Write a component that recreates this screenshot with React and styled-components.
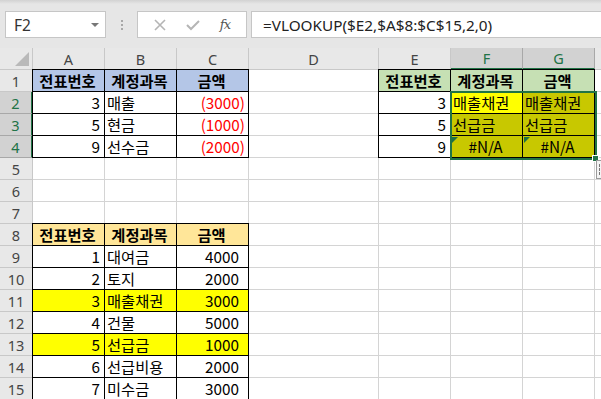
import React from 'react'
import styled, { createGlobalStyle } from 'styled-components'

const GlobalStyle = createGlobalStyle`
  body {
    margin: 0;
    overflow: hidden;
    background: #fff;
    font-family: "Noto Sans CJK KR", "Noto Sans", sans-serif;
  }
`

const GREEN = '#217346'
const BLUE = '#b4c6e7'
const LIGHTGREEN = '#c6e0b4'
const ORANGE = '#ffe699'
const YELLOW = '#ffff00'
const OLIVE = '#c8c800'

const Page = styled.div`
  width: 601px;
  height: 399px;
  overflow: hidden;
`

const TopBar = styled.div`
  height: 48px;
  display: flex;
  align-items: flex-start;
  padding-top: 11px;
  box-sizing: border-box;
  background: linear-gradient(#d2d2d2 0px, #e6e6e6 4px, #e6e6e6 100%);
`

const NameBox = styled.div`
  margin-left: 5px;
  width: 101px;
  height: 27px;
  box-sizing: border-box;
  background: #fff;
  border: 1px solid #c6c6c6;
  display: flex;
  align-items: center;
  justify-content: space-between;
  padding: 0 6px 0 8px;
  font-family: "Noto Sans", sans-serif;
  font-size: 15.5px;
  color: #333;
`

const Caret = styled.span`
  width: 0;
  height: 0;
  border-left: 4px solid transparent;
  border-right: 4px solid transparent;
  border-top: 4px solid #777;
`

const Grip = styled.div`
  width: 31px;
  height: 27px;
  display: flex;
  flex-direction: column;
  align-items: center;
  justify-content: center;
  gap: 2px;
  span {
    width: 2px;
    height: 2px;
    background: #a8a8a8;
  }
`

const FxBox = styled.div`
  width: 110px;
  height: 27px;
  box-sizing: border-box;
  background: #fff;
  border: 1px solid #c6c6c6;
  display: flex;
  align-items: center;
  justify-content: space-around;
  padding: 0 6px;
`

const FxText = styled.span`
  font-family: "DejaVu Serif", "Liberation Serif", serif;
  font-style: italic;
  font-size: 13px;
  color: #555;
  letter-spacing: -1px;
`

const Formula = styled.div`
  margin-left: 4px;
  flex: 1;
  height: 27px;
  box-sizing: border-box;
  background: #fff;
  border: 1px solid #c6c6c6;
  border-right: none;
  display: flex;
  align-items: center;
  padding-left: 11px;
  font-family: "Noto Sans", sans-serif;
  font-size: 15.3px;
  color: #222;
`

const SheetWrap = styled.div`
  position: relative;
`

const Grid = styled.div`
  display: grid;
  grid-template-columns: 33px 72px 72px 72px 130px 72px 72px 72px 80px;
  grid-auto-rows: 22px;
  width: 675px;
`

const Corner = styled.div`
  background: #e8e8e8;
  border-right: 1px solid #c8c8c8;
  border-bottom: 1px solid #c8c8c8;
  position: relative;
  &::after {
    content: '';
    position: absolute;
    right: 3px;
    bottom: 3px;
    border-left: 14px solid transparent;
    border-bottom: 14px solid #b9b9b9;
  }
`

const ColHead = styled.div`
  background: ${p => (p.$sel ? '#d2d2d2' : '#e8e8e8')};
  color: ${p => (p.$sel ? GREEN : '#444')};
  border-right: 1px solid ${p => (p.$sel ? '#a8a8a8' : '#c8c8c8')};
  border-bottom: ${p => (p.$sel ? `2px solid ${GREEN}` : '1px solid #c8c8c8')};
  display: flex;
  align-items: center;
  justify-content: center;
  font-family: "Noto Sans", sans-serif;
  font-size: 14.5px;
`

const RowHead = styled.div`
  background: ${p => (p.$sel ? '#d2d2d2' : '#e8e8e8')};
  color: ${p => (p.$sel ? GREEN : '#444')};
  border-right: ${p => (p.$sel ? `2px solid ${GREEN}` : '1px solid #c8c8c8')};
  border-bottom: 1px solid ${p => (p.$sel ? '#a8a8a8' : '#c8c8c8')};
  display: flex;
  align-items: center;
  justify-content: center;
  font-family: "Noto Sans", sans-serif;
  font-size: 14.5px;
`

const Cell = styled.div`
  position: relative;
  background: ${p => p.$bg || '#fff'};
  color: ${p => p.$color || '#000'};
  font-weight: ${p => (p.$bold ? 700 : 400)};
  font-size: 15.3px;
  line-height: 1;
  display: flex;
  align-items: center;
  justify-content: ${p => (p.$align === 'right' ? 'flex-end' : p.$align === 'center' ? 'center' : 'flex-start')};
  padding: 1px ${p => p.$pr ?? 4}px 0 2px;
  white-space: nowrap;
  overflow: visible;
  border-right: 1px solid #d4d4d4;
  border-bottom: 1px solid #d4d4d4;
  ${p => p.$table && `
    margin: -1px 0 0 -1px;
    border: 1px solid #000;
  `}
`

const ErrorMark = styled.span`
  position: absolute;
  top: 1px;
  left: 1px;
  border-top: 6px solid #1e7145;
  border-right: 6px solid transparent;
`

const Selection = styled.div`
  position: absolute;
  left: 450px;
  top: 43px;
  width: 147px;
  height: 69px;
  box-sizing: border-box;
  border: 2px solid ${GREEN};
  pointer-events: none;
`

const FillHandle = styled.div`
  position: absolute;
  left: 592px;
  top: 107px;
  width: 7px;
  height: 7px;
  box-sizing: border-box;
  background: ${GREEN};
  border: 1px solid #fff;
`

const PasteTag = styled.div`
  position: absolute;
  left: 596px;
  top: 112px;
  width: 14px;
  height: 19px;
  box-sizing: border-box;
  background: #f4f4f4;
  border: 1px solid #9a9a9a;
  &::after {
    content: '';
    position: absolute;
    left: 2px;
    top: 3px;
    width: 3px;
    height: 11px;
    border-left: 1px dashed #777;
  }
`

const cols = ['A', 'B', 'C', 'D', 'E', 'F', 'G', 'H']

const head = (text, bg) => ({ text, bg, align: 'center', bold: true, table: true })
const num = (text, extra = {}) => ({ text, align: 'right', table: true, ...extra })
const txt = (text, extra = {}) => ({ text, align: 'left', table: true, ...extra })

const rows = {
  1: { A: head('전표번호', BLUE), B: head('계정과목', BLUE), C: head('금액', BLUE),
       E: head('전표번호', LIGHTGREEN), F: head('계정과목', LIGHTGREEN), G: head('금액', LIGHTGREEN) },
  2: { A: num('3'), B: txt('매출'), C: num('(3000)', { color: '#ff0000', pr: 3 }),
       E: num('3'), F: txt('매출채권', { bg: YELLOW }), G: txt('매출채권', { bg: OLIVE }) },
  3: { A: num('5'), B: txt('현금'), C: num('(1000)', { color: '#ff0000', pr: 3 }),
       E: num('5'), F: txt('선급금', { bg: OLIVE }), G: txt('선급금', { bg: OLIVE }) },
  4: { A: num('9'), B: txt('선수금'), C: num('(2000)', { color: '#ff0000', pr: 3 }),
       E: num('9'), F: { text: '#N/A', align: 'center', table: true, bg: OLIVE, err: true },
       G: { text: '#N/A', align: 'center', table: true, bg: OLIVE, err: true } },
  8: { A: head('전표번호', ORANGE), B: head('계정과목', ORANGE), C: head('금액', ORANGE) },
}

const lookup = [
  ['1', '대여금', '4000'],
  ['2', '토지', '2000'],
  ['3', '매출채권', '3000', YELLOW],
  ['4', '건물', '5000'],
  ['5', '선급금', '1000', YELLOW],
  ['6', '선급비용', '2000'],
  ['7', '미수금', '3000'],
]
lookup.forEach(([n, name, amt, bg], i) => {
  rows[9 + i] = { A: num(n, { bg }), B: txt(name, { bg }), C: num(amt, { bg, pr: 9 }) }
})

const selectedRows = [2, 3, 4]
const selectedCols = ['F', 'G']

export default function App() {
  const cells = []
  cells.push(<Corner key="corner" />)
  // column H is only partly on screen, its letter falls outside the window
  cols.forEach(c => cells.push(
    <ColHead key={'h' + c} $sel={selectedCols.includes(c)}>{c === 'H' ? '' : c}</ColHead>
  ))
  for (let r = 1; r <= 15; r++) {
    cells.push(<RowHead key={'r' + r} $sel={selectedRows.includes(r)}>{r}</RowHead>)
    cols.forEach(c => {
      const d = (rows[r] && rows[r][c]) || {}
      cells.push(
        <Cell
          key={c + r}
          $bg={d.bg}
          $color={d.color}
          $bold={d.bold}
          $align={d.align}
          $table={d.table}
          $pr={d.pr}
        >
          {d.err && <ErrorMark />}
          {d.text}
        </Cell>
      )
    })
  }

  return (
    <Page>
      <GlobalStyle />
      <TopBar>
        <NameBox>
          F2
          <Caret />
        </NameBox>
        <Grip>
          <span />
          <span />
          <span />
        </Grip>
        <FxBox>
          <svg width="12" height="12" viewBox="0 0 12 12">
            <path d="M1 1 L11 11 M11 1 L1 11" stroke="#b5b5b5" strokeWidth="1.6" fill="none" />
          </svg>
          <svg width="14" height="12" viewBox="0 0 14 12">
            <path d="M1 6 L5 10 L13 2" stroke="#b5b5b5" strokeWidth="2" fill="none" />
          </svg>
          <FxText>fx</FxText>
        </FxBox>
        <Formula>=VLOOKUP($E2,$A$8:$C$15,2,0)</Formula>
      </TopBar>
      <SheetWrap>
        <Grid>{cells}</Grid>
        <Selection />
        <FillHandle />
        <PasteTag />
      </SheetWrap>
    </Page>
  )
}
